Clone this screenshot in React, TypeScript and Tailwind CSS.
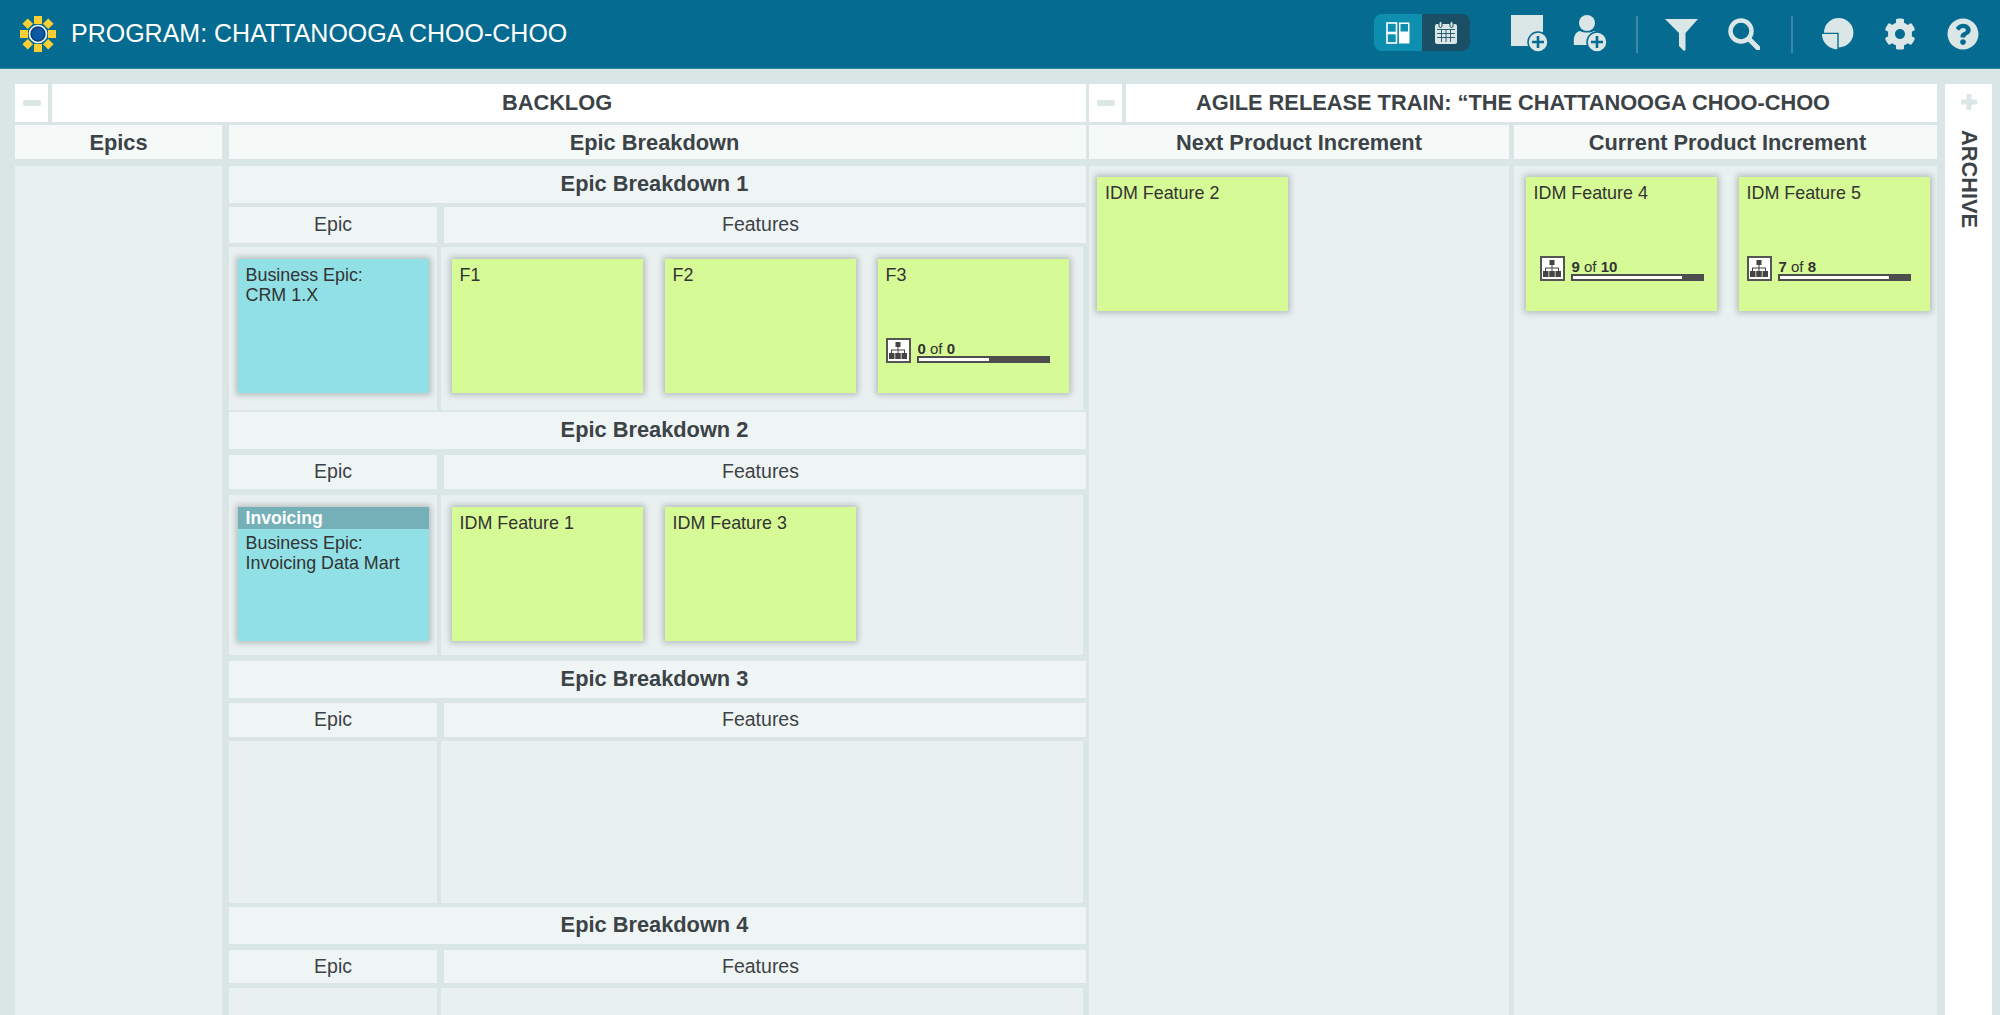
import { FaCog, FaQuestionCircle } from "react-icons/fa";

type Feature = { title: string; label?: string; done?: number; total?: number; fill?: number; indent?: boolean };

function Logo() {
  return (
    <svg width="38" height="38" viewBox="0 0 38 38" className="shrink-0">
      <g fill="#fcd034">
        <rect x="15" y="1" width="8" height="8" />
        <rect x="15" y="29" width="8" height="8" />
        <rect x="1" y="15" width="8" height="8" />
        <rect x="29" y="15" width="8" height="8" />
        <rect x="5" y="5" width="7.5" height="7.5" transform="rotate(45 8.75 8.75)" />
        <rect x="25.5" y="5" width="7.5" height="7.5" transform="rotate(45 29.25 8.75)" />
        <rect x="5" y="25.5" width="7.5" height="7.5" transform="rotate(45 8.75 29.25)" />
        <rect x="25.5" y="25.5" width="7.5" height="7.5" transform="rotate(45 29.25 29.25)" />
      </g>
      <circle cx="19" cy="19" r="8.5" fill="#0d3f78" stroke="#fff" strokeWidth="1.6" />
      <circle cx="19" cy="19" r="6" fill="#0f5aa5" />
    </svg>
  );
}

function BoardIcon() {
  return (
    <svg width="24" height="22" viewBox="0 0 24 22" fill="none">
      <rect x="1" y="1" width="9.5" height="9.5" stroke="#fff" strokeWidth="1.6" />
      <rect x="1" y="11.5" width="9.5" height="9.5" stroke="#fff" strokeWidth="1.6" />
      <rect x="13" y="0.5" width="10.5" height="21" fill="#fff" />
      <rect x="14.5" y="2" width="7.5" height="7.5" fill="#0e8fb0" />
    </svg>
  );
}

function CalendarIcon() {
  return (
    <svg width="24" height="24" viewBox="0 0 24 24" fill="none">
      <rect x="1" y="3" width="22" height="20" rx="2" fill="#dbe6e6" />
      <rect x="5" y="0.5" width="3" height="6" rx="1.5" fill="#dbe6e6" stroke="#1b4f66" strokeWidth="1" />
      <rect x="16" y="0.5" width="3" height="6" rx="1.5" fill="#dbe6e6" stroke="#1b4f66" strokeWidth="1" />
      <path d="M3 8.500h18M3 12.500h18M3 16.500h18M7.500 8.500V21M12 8.500V21M16.500 8.500V21" stroke="#1b4f66" strokeWidth="0.9" />
    </svg>
  );
}

function PlusBadge({ cx, cy }: { cx: number; cy: number }) {
  return (
    <g>
      <circle cx={cx} cy={cy} r="10" fill="#dbe6e6" stroke="#056b90" strokeWidth="1.5" />
      <path d={`M${cx - 6} ${cy}h12M${cx} ${cy - 6}v12`} stroke="#056b90" strokeWidth="2.6" />
    </g>
  );
}

function NewCardIcon() {
  return (
    <svg width="38" height="40" viewBox="0 0 38 40">
      <rect x="0" y="1" width="32" height="31" fill="#dbe6e6" />
      <PlusBadge cx="27" cy="28" />
    </svg>
  );
}

function NewUserIcon() {
  return (
    <svg width="36" height="40" viewBox="0 0 36 40">
      <circle cx="14" cy="9" r="8" fill="#dbe6e6" />
      <path d="M1 31c-1-8 1-13 6-14 4 2 10 2 14 0 5 1 7 6 6 14z" fill="#dbe6e6" />
      <PlusBadge cx="24" cy="28" />
    </svg>
  );
}

function FilterIcon() {
  return (
    <svg width="33" height="33" viewBox="0 0 33 33">
      <path d="M0 1h33L20.500 15v17l-1.500 1-5-5V15z" fill="#dbe6e6" />
    </svg>
  );
}

function SearchIcon() {
  return (
    <svg width="32" height="32" viewBox="0 0 32 32" fill="none" stroke="#dbe6e6">
      <circle cx="13" cy="13" r="10.500" strokeWidth="4.500" />
      <path d="M21 21l9 9" strokeWidth="5" strokeLinecap="round" />
    </svg>
  );
}

function PieIcon() {
  return (
    <svg width="32" height="32" viewBox="0 0 32 32" fill="#dbe6e6">
      <path d="M16.700 0A14.700 14.700 0 1 1 16.700 29.400V14.700H2A14.700 14.700 0 0 1 16.700 0z" />
      <path d="M0 16H15.300V31.300A15.300 15.300 0 0 1 0 16z" />
    </svg>
  );
}

function OrgIcon() {
  return (
    <div className="w-[25px] h-[25px] shrink-0 bg-white border-2 border-[#555] flex items-center justify-center">
      <svg width="18" height="17" viewBox="0 0 18 17" fill="#444">
        <rect x="6.500" y="0" width="5" height="5" />
        <rect x="0" y="11" width="5.500" height="6" />
        <rect x="6.250" y="11" width="5.500" height="6" />
        <rect x="12.500" y="11" width="5.500" height="6" />
        <path d="M8.500 5h1v2.500H16V11h-1V8.500H9.500V11h-1V8.500H3V11H2V7.500h6.500z" />
      </svg>
    </div>
  );
}

function Progress({ done, total, fill, indent }: { done: number; total: number; fill: number; indent?: boolean }) {
  return (
    <div className={`mt-auto mb-[30px] flex items-end gap-[6px] ${indent ? "ml-[14px]" : "ml-[8px]"}`}>
      <OrgIcon />
      <div className="w-[133px]">
        <div className="text-[15px] leading-[15px] pl-[1px] text-[#333]">
          <b>{done}</b> of <b>{total}</b>
        </div>
        <div className="h-[7px] bg-[#4d4d4d] p-[2px]">
          <div className="h-full bg-white" style={{ width: `${fill}%` }} />
        </div>
      </div>
    </div>
  );
}

function Card({ title, label, done, total, fill, indent, color }: Feature & { color: string }) {
  return (
    <div className={`w-[191px] h-[134px] shrink-0 flex flex-col shadow-[0_0_6px_2px_rgba(0,0,0,0.22)] text-[17.900px] leading-[20px] text-[#333] ${color}`}>
      {label && (
        <div className="h-[22px] px-2 bg-[#75b0b8] text-white font-bold text-[17.600px] leading-[22px]">{label}</div>
      )}
      <div className={`px-2 whitespace-pre-line ${label ? "pt-[4px]" : "pt-[6px]"}`}>{title}</div>
      {total !== undefined && <Progress done={done ?? 0} total={total} fill={fill ?? 0} indent={indent} />}
    </div>
  );
}

function Block({
  n,
  epic,
  features,
  subClass,
  cellClass,
}: {
  n: number;
  epic?: Feature;
  features: Feature[];
  subClass: string;
  cellClass: string;
}) {
  return (
    <div className="shrink-0">
      <div className="h-[37px] pr-[6px] bg-[#eff5f5] flex items-center justify-center font-bold text-[21.800px] text-[#3c4347]">
        Epic Breakdown {n}
      </div>
      <div className={`flex gap-[7px] text-[19.500px] text-[#3c4347] ${subClass}`}>
        <div className="w-[208px] bg-[#eff5f5] flex items-center justify-center">Epic</div>
        <div className="flex-1 pr-[9px] bg-[#eff5f5] flex items-center justify-center">Features</div>
      </div>
      <div className={`flex gap-[4px] pr-[3px] ${cellClass}`}>
        <div className="w-[208px] bg-[#e8f1f0] pl-[8.500px] pt-[12px]">
          {epic && <Card {...epic} color="bg-[#90e0e6]" />}
        </div>
        <div className="flex-1 bg-[#e8f1f0] pl-[10.500px] pt-[12px] flex gap-[22px]">
          {features.map((f) => (
            <Card key={f.title} {...f} color="bg-[#d6fa96]" />
          ))}
        </div>
      </div>
    </div>
  );
}

function TopTitle({ children, className }: { children: string; className: string }) {
  return (
    <div className="h-[38px] flex gap-[4px] font-bold text-[21.800px] text-[#3c4347]">
      <div className="w-[33px] bg-white flex items-center justify-center">
        <div className="w-[18px] h-[6px] rounded-[2px] bg-[#dbe6e6]" />
      </div>
      <div className={`flex-1 bg-white flex items-center justify-center ${className}`}>{children}</div>
    </div>
  );
}

export default function App() {
  return (
    <div className="h-screen overflow-hidden flex flex-col bg-[#dae6e6] font-['Liberation_Sans',Arial,sans-serif]">
      <header className="h-[69px] shrink-0 bg-[#056b90] border-b border-[#2a88a8] flex items-center pl-[19px]">
        <Logo />
        <div className="ml-[14px] text-[25px] text-white">PROGRAM: CHATTANOOGA CHOO-CHOO</div>
        <div className="ml-auto flex items-center">
          <div className="flex h-[37px] w-[96px] mb-[3px] rounded-[8px] overflow-hidden">
            <div className="w-[48px] bg-[#0e8fb0] flex items-center justify-center"><BoardIcon /></div>
            <div className="w-[48px] bg-[#1b4f66] flex items-center justify-center"><CalendarIcon /></div>
          </div>
          <div className="ml-[41px]"><NewCardIcon /></div>
          <div className="ml-[24px]"><NewUserIcon /></div>
          <div className="ml-[27px] w-[2px] h-[37px] bg-[#3d8aa8]" />
          <div className="ml-[27px]"><FilterIcon /></div>
          <div className="ml-[30px]"><SearchIcon /></div>
          <div className="ml-[31px] w-[2px] h-[37px] bg-[#3d8aa8]" />
          <div className="ml-[29px]"><PieIcon /></div>
          <FaCog className="ml-[30px] text-[32px] text-[#dbe6e6]" />
          <FaQuestionCircle className="ml-[31px] mr-[21px] text-[32px] text-[#dbe6e6]" />
        </div>
      </header>

      <main className="flex-1 min-h-0 flex pl-[15px] pr-[8px] pt-[15px]">
        <section className="w-[1071px] flex flex-col">
          <TopTitle className="pr-[24px]">BACKLOG</TopTitle>
          <div className="mt-[3px] h-[34px] flex gap-[7px] font-bold text-[21.800px] text-[#3c4347]">
            <div className="w-[207px] pt-[2px] bg-[#f5f9f8] flex items-center justify-center">Epics</div>
            <div className="flex-1 pt-[2px] pr-[6px] bg-[#f5f9f8] flex items-center justify-center">Epic Breakdown</div>
          </div>
          <div className="mt-[7px] flex-1 min-h-0 flex gap-[7px]">
            <div className="w-[207px] bg-[#e8f1f0]" />
            <div className="flex-1 flex flex-col">
              <Block
                n={1}
                subClass="mt-[4px] h-[36px]"
                cellClass="mt-[4px] h-[163px] mb-[2px]"
                epic={{ title: "Business Epic:\nCRM 1.X" }}
                features={[{ title: "F1" }, { title: "F2" }, { title: "F3", done: 0, total: 0, fill: 55 }]}
              />
              <Block
                n={2}
                subClass="mt-[6px] h-[34px]"
                cellClass="mt-[6px] h-[160px] mb-[6px]"
                epic={{ title: "Business Epic:\nInvoicing Data Mart", label: "Invoicing" }}
                features={[{ title: "IDM Feature 1" }, { title: "IDM Feature 3" }]}
              />
              <Block n={3} subClass="mt-[5px] h-[34px]" cellClass="mt-[4px] h-[162px] mb-[4px]" features={[]} />
              <Block n={4} subClass="mt-[6px] h-[33px]" cellClass="mt-[5px] h-[162px]" features={[]} />
            </div>
          </div>
        </section>

        <section className="ml-[3px] w-[848px] flex flex-col">
          <TopTitle className="pr-[37px]">AGILE RELEASE TRAIN: “THE CHATTANOOGA CHOO-CHOO</TopTitle>
          <div className="mt-[3px] h-[34px] flex gap-[5px] font-bold text-[21.800px] text-[#3c4347]">
            <div className="w-[420px] pt-[2px] bg-[#f5f9f8] flex items-center justify-center">Next Product Increment</div>
            <div className="flex-1 pt-[2px] pl-[4px] bg-[#f5f9f8] flex items-center justify-center">Current Product Increment</div>
          </div>
          <div className="mt-[7px] flex-1 min-h-0 flex gap-[5px]">
            <div className="w-[420px] bg-[#e8f1f0] pl-[8px] pt-[11px]">
              <Card title="IDM Feature 2" color="bg-[#d6fa96]" />
            </div>
            <div className="flex-1 bg-[#e8f1f0] pl-[11.500px] pt-[11px] flex gap-[22px] items-start">
              <Card title="IDM Feature 4" done={9} total={10} fill={85} indent color="bg-[#d6fa96]" />
              <Card title="IDM Feature 5" done={7} total={8} fill={85} color="bg-[#d6fa96]" />
            </div>
          </div>
        </section>

        <aside className="ml-[8px] w-[47px] bg-white flex flex-col items-center pt-[10px]">
          <svg width="16" height="16" viewBox="0 0 16 16" fill="#dbe6e6">
            <path d="M5.500 0h5v5.500H16v5h-5.500V16h-5v-5.500H0v-5h5.500z" />
          </svg>
          <div className="mt-[20px] font-bold text-[21.800px] text-[#3c4347] [writing-mode:vertical-rl]">ARCHIVE</div>
        </aside>
      </main>
    </div>
  );
}
